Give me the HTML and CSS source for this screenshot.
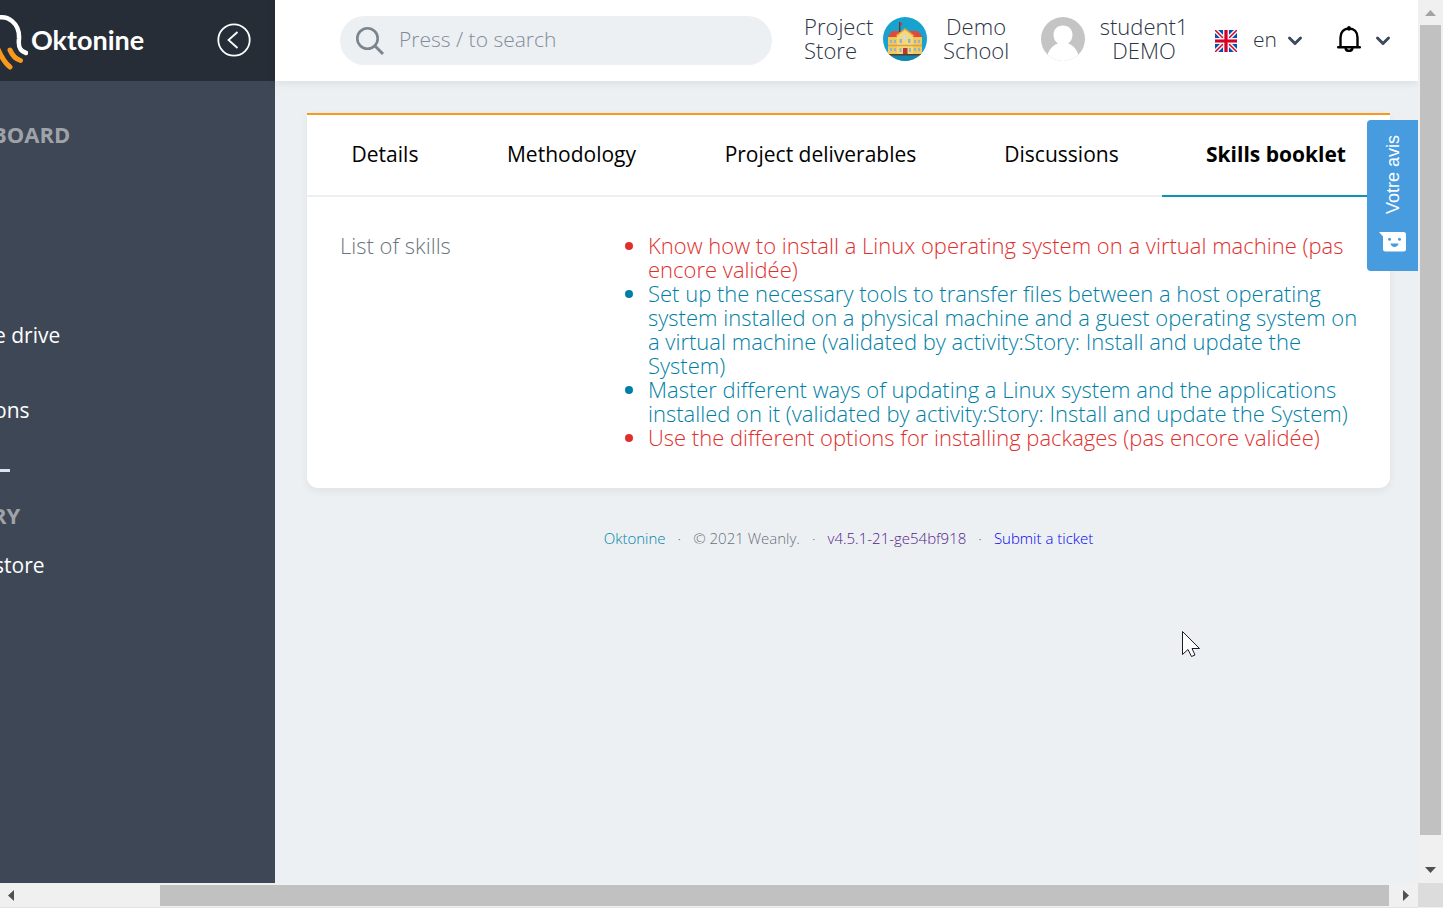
FILE: index.html
```html
<!DOCTYPE html>
<html lang="en">
<head>
<meta charset="utf-8">
<title>Oktonine - Skills booklet</title>
<link rel="stylesheet" href="styles.css">
</head>
<body>
<div class="viewport">
  <div class="app">
    <aside class="sidebar">
      <div class="brand">
        <a class="logo" href="#">
          <svg class="logo-mark" width="28" height="60" viewBox="0 0 28 60" fill="none" stroke-linecap="round">
            <path d="M-6 9C8 3 20 14 19 29C18 37 20 41 26 43" stroke="#fff" stroke-width="4.500"/>
            <path d="M10 40C12 45 16 49 20.500 50.500" stroke="#f8981d" stroke-width="5"/>
            <path d="M-5 33C-1 41 2 51 10 57" stroke="#f8981d" stroke-width="5"/>
          </svg>
          <span class="logo-name">Oktonine</span>
        </a>
        <button class="collapse" type="button" aria-label="Collapse menu">
          <svg width="34" height="34" viewBox="0 0 34 34" fill="none" stroke="#fff" stroke-width="1.800"><circle cx="17" cy="17" r="15.700"/><path d="M20.500 9L11.500 17L20.500 25"/></svg>
        </button>
      </div>
      <nav class="menu">
        <h2 class="menu-title menu-title-first">BOARD</h2>
        <a class="menu-link menu-link-drive" href="#">e drive</a>
        <a class="menu-link" href="#">ons</a>
        <hr class="menu-rule">
        <h2 class="menu-title">RY</h2>
        <a class="menu-link" href="#">store</a>
      </nav>
    </aside>

    <div class="main">
      <header class="topbar">
        <label class="search">
          <svg width="30" height="30" viewBox="0 0 30 30" fill="none" stroke="#7b858f" stroke-width="2.600"><circle cx="12.500" cy="12.500" r="10.200"/><path d="M20 20L28 28" stroke-width="3"/></svg>
          <input type="search" placeholder="Press / to search" aria-label="Search">
        </label>
        <a class="store" href="#">Project Store</a>
        <a class="school" href="#">
          <svg width="44" height="44" viewBox="0 0 44 44">
            <defs><clipPath id="disc"><circle cx="22" cy="22" r="22"/></clipPath></defs>
            <g clip-path="url(#disc)">
              <path fill="#17a2cf" d="M0 0h44v44H0z"/>
              <path fill="#1189ae" d="M0 37h44v7H0z"/>
              <path fill="#df4a3c" d="M9 14H18L14 21H4zM26 14H35L40 21H30z"/>
              <path fill="#f2c75c" d="M5 20H39V37H5z"/>
              <path fill="#f7d779" d="M14 37V18L22 12L30 18V37z"/>
              <path fill="none" stroke="#d9a441" stroke-width="1.400" d="M13 19L22 12L31 19M5 28.500H39"/>
              <path fill="#5a3a31" d="M16 5h1.400v10H16zM4 37h36v1.600H4z"/>
              <path fill="#d7352e" d="M17 5.500L20 7L17 9z"/>
              <path fill="#8fb6c9" d="M7 23h2v3H7zM11 23h2v3h-2zM31 23h2v3h-2zM35 23h2v3h-2zM7 31h2v3H7zM11 31h2v3h-2zM31 31h2v3h-2zM35 31h2v3h-2zM16.500 22h2.500v4h-2.500zM25 22h2.500v4H25zM16.500 31h2v4h-2zM26 31h2v4h-2z"/>
              <circle cx="22" cy="20.500" r="2.200" fill="#c9dde5"/>
              <path fill="#b33b33" d="M20 31h4.500v6H20z"/>
            </g>
          </svg>
          <span>Demo School</span>
        </a>
        <a class="user" href="#">
          <svg width="44" height="44" viewBox="0 0 44 44">
            <defs><clipPath id="face"><circle cx="22" cy="22" r="22"/></clipPath></defs>
            <g clip-path="url(#face)">
              <path fill="#c4c4c4" d="M0 0h44v44H0z"/>
              <path fill="#fff" d="M22 8.500C28 8.500 31.500 12.500 31.500 18C31.500 22 29.500 25 27 26.500C33 28.500 36 33 37.500 38L38 44H6L6.500 38C8 33 11 28.500 17 26.500C14.500 25 12.500 22 12.500 18C12.500 12.500 16 8.500 22 8.500z"/>
            </g>
          </svg>
          <span>student1 DEMO</span>
        </a>
        <button class="language" type="button">
          <svg width="22" height="22" viewBox="0 0 22 22">
            <path fill="#0052b4" d="M0 0h22v22H0z"/>
            <path stroke="#fff" stroke-width="4.400" d="M0 0L22 22M22 0L0 22"/>
            <path stroke="#d80027" stroke-width="1.500" d="M0 0L22 22M22 0L0 22"/>
            <path fill="#f0f0f0" d="M8 0h6v22H8zM0 8h22v6H0z"/>
            <path fill="#d80027" d="M9.400 0h3.200v22H9.400zM0 9.400h22v3.200H0z"/>
          </svg>
          <span>en</span>
          <svg width="16" height="12" viewBox="0 0 16 12" fill="none" stroke="#3c4a5e" stroke-width="3" stroke-linecap="round" stroke-linejoin="round"><path d="M2.500 3L8 8.500L13.500 3"/></svg>
        </button>
        <button class="alerts" type="button" aria-label="Notifications">
          <svg width="24" height="30" viewBox="0 0 24 30" fill="none" stroke="#000" stroke-width="2.400">
            <path d="M3.500 21V11.500C3.500 6 7 2.500 12 2.500C17 2.500 20.500 6 20.500 11.500V21"/>
            <path d="M1.200 21.200H22.800" stroke-linecap="round"/><path d="M12 1.800V3" stroke-width="3.600" stroke-linecap="round"/>
            <path d="M8.500 22C9 25.800 15 25.800 15.500 22"/>
          </svg>
          <svg width="16" height="12" viewBox="0 0 16 12" fill="none" stroke="#3c4a5e" stroke-width="3" stroke-linecap="round" stroke-linejoin="round"><path d="M2.500 3L8 8.500L13.500 3"/></svg>
        </button>
      </header>

      <main class="content">
        <section class="card">
          <nav class="tabs">
            <a class="tab" href="#">Details</a>
            <a class="tab" href="#">Methodology</a>
            <a class="tab" href="#">Project deliverables</a>
            <a class="tab" href="#">Discussions</a>
            <a class="tab tab-active" href="#" aria-current="page">Skills booklet</a>
          </nav>
          <div class="panel">
            <div class="panel-label">List of skills</div>
            <ul class="skills">
              <li class="pending">Know how to install a Linux operating system on a virtual machine (pas encore validée)</li>
              <li class="valid">Set up the necessary tools to transfer files between a host operating system installed on a physical machine and a guest operating system on a virtual machine (validated by activity:Story: Install and update the System)</li>
              <li class="valid">Master different ways of updating a Linux system and the applications installed on it (validated by activity:Story: Install and update the System)</li>
              <li class="pending">Use the different options for installing packages (pas encore validée)</li>
            </ul>
          </div>
        </section>
        <footer class="footer">
          <a class="footer-home" href="#">Oktonine</a><span>·</span><span>© 2021 Weanly.</span><span>·</span><a class="footer-version" href="#">v4.5.1-21-ge54bf918</a><span>·</span><a class="footer-ticket" href="#">Submit a ticket</a>
        </footer>
      </main>
    </div>

    <button class="feedback" type="button">
      <span>Votre avis</span>
      <svg width="28" height="20" viewBox="0 0 28 20"><path fill="#fff" d="M0 0H24.500Q27 0 27 2.500V17Q27 19.500 24.500 19.500H6.500Q4 19.500 4 17V4.500z"/><g fill="#479bdf"><circle cx="10.500" cy="7.300" r="1.500"/><circle cx="20.500" cy="7.300" r="1.500"/><path d="M11.500 11.500H19.500C19 16 12 16 11.500 11.500z"/></g></svg>
    </button>
    <svg class="pointer" width="20" height="30" viewBox="0 0 20 30"><path fill="#fff" stroke="#1c1c28" d="M.5 1.500V24.500L6 19.500L9.500 26.500L13 25L10 18.500H17.500z"/></svg>
  </div>

  <div class="bar bar-y">
    <svg width="11" height="6" viewBox="0 0 11 6"><path fill="#a3a3a3" d="M0 6L5.500 0L11 6z"/></svg>
    <div class="thumb"></div>
    <svg width="11" height="6" viewBox="0 0 11 6"><path fill="#505050" d="M0 0H11L5.500 6z"/></svg>
  </div>
  <div class="bar bar-x">
    <svg width="6" height="11" viewBox="0 0 6 11"><path fill="#505050" d="M6 0V11L0 5.500z"/></svg>
    <div class="thumb"></div>
    <svg width="6" height="11" viewBox="0 0 6 11"><path fill="#505050" d="M0 0V11L6 5.500z"/></svg>
  </div>
  <div class="corner"></div>
</div>
</body>
</html>
```
FILE: styles.css
```css
* { box-sizing: border-box; }

body {
  margin: 0;
  font-family: "Open Sans", "Noto Sans", sans-serif;
  font-size: 22px;
  font-weight: 300;
  line-height: 24px;
  color: #2b3444;
}

a { color: inherit; text-decoration: none; }

button {
  border: 0;
  padding: 0;
  background: none;
  color: inherit;
  font: inherit;
}

svg { display: block; flex: none; }

.viewport {
  display: grid;
  grid-template-columns: 1fr 25px;
  grid-template-rows: 1fr 25px;
  height: 100vh;
  overflow: hidden;
}

.app {
  position: relative;
  display: flex;
  min-width: 0;
  overflow: hidden;
  background: #ecf0f3;
}

/* Sidebar */
.sidebar {
  flex: none;
  width: 275px;
  background: #3e4755;
  color: #fff;
  overflow: hidden;
}

.brand {
  display: flex;
  align-items: center;
  justify-content: space-between;
  height: 81px;
  padding: 0 24px 2px 0;
  background: #262d36;
}

.logo { display: flex; align-items: center; gap: 3px; }

.logo-name {
  font-family: Lato, sans-serif;
  font-size: 27px;
  font-weight: 700;
  line-height: 32px;
}

.menu { display: flex; flex-direction: column; align-items: flex-start; }

.menu-title {
  margin: 0 0 0 -8px;
  font-size: 22px;
  font-weight: 700;
  line-height: 24px;
  color: #9fa3a9;
}

.menu-title-first { margin-top: 41px; }

.menu-link { margin: 26px 0 0 -6px; font-size: 21px; font-weight: 400; }

.menu-link-drive { margin-top: 177px; margin-bottom: 25px; }

.menu-rule {
  width: 10px;
  height: 3px;
  margin: 47px 0 31px;
  border: 0;
  background: #dde3ee;
}

/* Top bar */
.main { flex: 1; min-width: 0; }

.topbar {
  display: flex;
  align-items: center;
  height: 81px;
  padding: 0 27px 0 65px;
  background: #fff;
  box-shadow: 0 2px 8px rgba(0, 0, 0, .08);
}

.search {
  display: flex;
  flex: 1;
  align-items: center;
  gap: 14px;
  min-width: 0;
  height: 49px;
  margin-right: 32px;
  padding: 0 15px;
  border-radius: 25px;
  background: #ecf0f3;
}

.search input {
  flex: 1;
  min-width: 0;
  padding: 0 0 3px;
  border: 0;
  outline: 0;
  background: none;
  font: inherit;
  font-size: 21px;
}

.search input::placeholder { color: #828c9a; opacity: 1; }

.store { width: 79px; padding-bottom: 5px; }

.school, .user {
  display: flex;
  align-items: center;
  padding-bottom: 3px;
  text-align: center;
}

.school span, .user span { padding-bottom: 3px; }

.school span { width: 98px; padding-left: 14px; padding-right: 14px; }

.school { margin-right: 16px; }

.user span { width: 118px; padding-left: 12px; padding-right: 12px; }

.user { margin-right: 12px; }

.language { display: flex; align-items: center; gap: 16px; margin-right: 34px; font-size: 21px; }

.language span { margin-right: -6px; padding-bottom: 3px; }

.alerts { display: flex; align-items: center; gap: 14px; }

/* Card */
.content { padding: 32px 28px 0 32px; }

.card {
  border-top: 2px solid #f8981d;
  border-radius: 0 0 11px 11px;
  background: #fff;
  box-shadow: 0 3px 8px rgba(0, 0, 0, .06);
}

.tabs {
  display: grid;
  grid-template-columns: 156fr 217fr 281fr 201fr 228fr;
  border-bottom: 2px solid #ecf0f3;
}

.tab {
  margin-bottom: -2px;
  padding: 27px 0 29px;
  border-bottom: 2px solid transparent;
  font-size: 21px;
  font-weight: 400;
  text-align: center;
  color: #000;
}

.tab-active { border-color: #0a95b5; font-weight: 700; }

.panel {
  display: grid;
  grid-template-columns: 265px 1fr;
  padding: 36px 24px 39px 33px;
}

.panel-label { color: #6c747d; }

.skills { margin: 0; padding-left: 43px; }

.pending { color: #e0302e; }

.valid { color: #007fa5; }

/* Footer */
.footer {
  display: flex;
  justify-content: center;
  gap: 12px;
  padding-top: 38px;
  font-size: 15px;
  color: #69717a;
}

.footer-home { color: #0085a8; }

.footer-version { color: #551a8b; }

.footer-ticket { color: #0000ee; }

/* Overlays */
.feedback {
  position: absolute;
  top: 120px;
  right: 0;
  display: flex;
  flex-direction: column;
  align-items: center;
  gap: 18px;
  width: 51px;
  padding: 15px 0 19px;
  border-radius: 4px 0 0 4px;
  background: #479bdf;
  color: #fff;
  font-family: "Liberation Sans", Arial, sans-serif;
  font-size: 18px;
  font-weight: 400;
}

.feedback span { writing-mode: vertical-rl; transform: rotate(180deg); }

.pointer { position: absolute; left: 1182px; top: 630px; }

/* Scroll bars */
.bar { display: flex; align-items: center; background: #f0f0f0; }

.thumb { flex: 1; background: #c1c1c1; }

.bar-y { flex-direction: column; padding: 10px 0; }

.bar-y .thumb { width: 21px; margin: 9px 0 32px; }

.bar-x { padding: 1px 9px 0 8px; border-bottom: 1px solid #e4e4e4; }

.bar-x .thumb { height: 21px; margin: 0 14px 0 146px; }

.corner { background: #dcdcdc; border-bottom: 1px solid #f0f0f0; }
```
